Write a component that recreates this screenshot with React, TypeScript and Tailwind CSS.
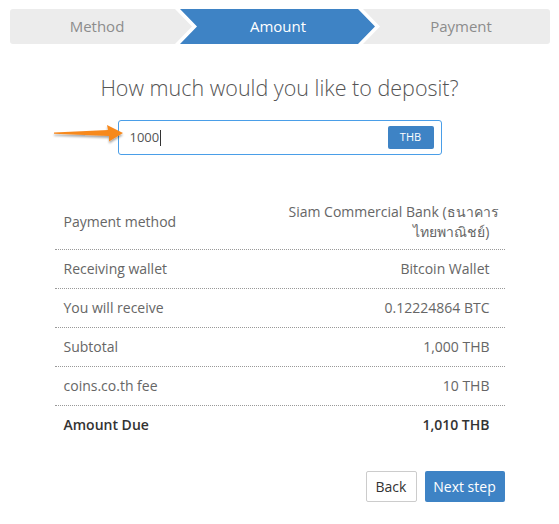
import React from 'react'

const rows: { label: string; value: string[]; bold?: boolean }[] = [
  { label: 'Payment method', value: ['Siam Commercial Bank (ธนาคาร', 'ไทยพาณิชย์)'] },
  { label: 'Receiving wallet', value: ['Bitcoin Wallet'] },
  { label: 'You will receive', value: ['0.12224864 BTC'] },
  { label: 'Subtotal', value: ['1,000 THB'] },
  { label: 'coins.co.th fee', value: ['10 THB'] },
  { label: 'Amount Due', value: ['1,010 THB'], bold: true },
]

function StepBar() {
  return (
    <div className="relative h-[35px] w-[540px] overflow-hidden rounded-[3px] bg-[#ececec]">
      <svg className="absolute inset-0" width="540" height="35" viewBox="0 0 540 35">
        <polygon points="165,0 182,17.5 165,35 353,35 370,17.5 353,0" fill="#ffffff" />
        <polygon points="170,0 187,17.5 170,35 348,35 365,17.5 348,0" fill="#3e83c5" />
      </svg>
      <div className="relative grid h-full grid-cols-[174px_188px_1fr] items-center text-center text-[15px]">
        <span className="text-[#8c8c8c]">Method</span>
        <span className="text-white">Amount</span>
        <span className="text-[#8c8c8c]">Payment</span>
      </div>
    </div>
  )
}

function PointerArrow() {
  return (
    <svg className="absolute left-[41px] top-[2px]" width="76" height="26" viewBox="0 0 76 26">
      <defs>
        <filter id="sh" x="-10%" y="-40%" width="130%" height="200%">
          <feDropShadow dx="0" dy="2" stdDeviation="1.2" floodColor="#000" floodOpacity="0.35" />
        </filter>
      </defs>
      <path
        d="M3 10.5 L57 8 L56 3 L72 11 L58 19.5 L58 14 L3 11.8 Z"
        fill="#f7891f"
        filter="url(#sh)"
      />
    </svg>
  )
}

export default function App() {
  return (
    <div
      className="h-[524px] w-[559px] bg-white px-[10px] pt-[9px]"
      style={{ fontFamily: '"Open Sans", "Noto Sans", sans-serif' }}
    >
      <StepBar />

      <h1 className="mt-[29px] text-center text-[21.5px] font-light leading-[30px] text-[#555]">
        How much would you like to deposit?
      </h1>

      <div className="relative mt-[17px] flex justify-center">
        <PointerArrow />
        <div className="flex h-[35px] w-[324px] items-center justify-between rounded-[3px] border border-[#4a9ee8] pl-[11px] pr-[7px]">
          <span className="flex items-center text-[13px] text-[#555]">
            1000
            <span className="ml-px h-[16px] w-px bg-[#333]" />
          </span>
          <button className="h-[23px] w-[46px] rounded-[2px] bg-[#3e83c5] text-[11px] text-white">
            THB
          </button>
        </div>
      </div>

      <div className="mx-auto mt-[39px] w-[450px] text-[14px]">
        {rows.map((r, i) => (
          <div
            key={r.label}
            className={`grid grid-cols-2 leading-[20px] ${
              i < rows.length - 1 ? 'border-b border-dotted border-[#999]' : ''
            } ${r.bold ? 'font-semibold text-[#333]' : 'text-[#666]'} ${
              i === 0 ? 'pt-[8px] pb-[7px]' : 'py-[9px]'
            }`}
          >
            <div className="flex items-center pl-[9px]">{r.label}</div>
            <div className="pl-[9px] pr-[15px] text-right">
              {r.value.map((v) => (
                <div key={v} className="h-[20px] overflow-visible whitespace-nowrap">
                  {v}
                </div>
              ))}
            </div>
          </div>
        ))}
      </div>

      <div className="mx-auto mt-[27px] flex w-[450px] justify-end gap-[8px]">
        <button className="h-[31px] w-[51px] rounded-[2px] border border-[#ccc] bg-white text-[14px] text-[#333]">
          Back
        </button>
        <button className="h-[31px] w-[80px] rounded-[2px] bg-[#3e83c5] text-[14px] text-white">
          Next step
        </button>
      </div>
    </div>
  )
}
